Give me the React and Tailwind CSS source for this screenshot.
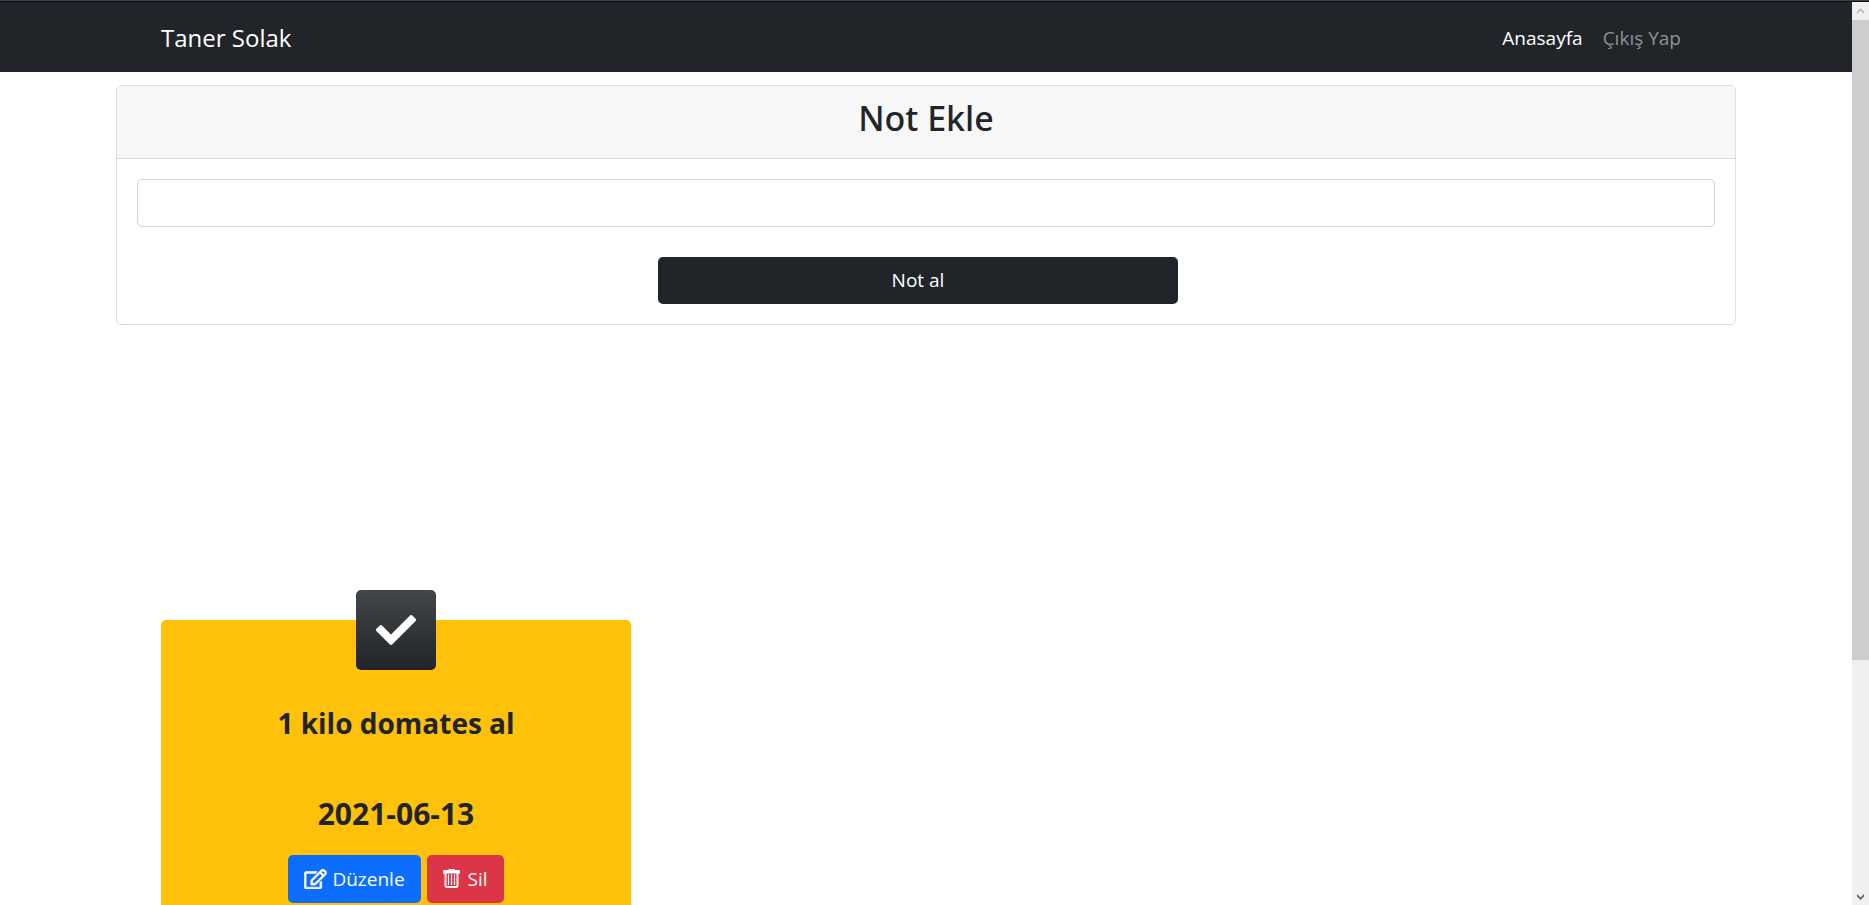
import { FaCheck, FaRegEdit } from "react-icons/fa";

function TrashIcon({ className }) {
  return (
    <svg viewBox="0 0 17 20" className={className} aria-hidden="true">
      <path fill="currentColor" d="M6 0h5l1 1h4a1 1 0 0 1 1 1v2.500H0V2a1 1 0 0 1 1-1h4z" />
      <path
        fill="none"
        stroke="currentColor"
        strokeWidth="2"
        d="M2.500 4v12.500A1.500 1.500 0 0 0 4 18h9a1.500 1.500 0 0 0 1.500-1.500V4"
      />
      <path stroke="currentColor" strokeWidth="1.200" d="M5.500 5.500v10.500M8.500 5.500v10.500M11.500 5.500v10.500" />
    </svg>
  );
}

function Navbar() {
  return (
    <nav className="h-[72px] shrink-0 border-t border-[#33414f] bg-[#212529]">
      <div className="flex h-full items-center justify-between border-t border-[#0e1216] px-[161px] pt-px">
        <a href="#" className="text-2xl leading-[38px] text-white">
          Taner Solak
        </a>
        <ul className="flex items-center gap-5 pr-[10px] text-[19px] leading-[30px]">
          <li>
            <a href="#" className="text-white" aria-current="page">
              Anasayfa
            </a>
          </li>
          <li>
            <a href="#" className="text-[#909294]">
              Çıkış Yap
            </a>
          </li>
        </ul>
      </div>
    </nav>
  );
}

function AddNote() {
  return (
    <section className="mx-[116px] mt-[13px] rounded-[5px] border border-[#dfdfdf] bg-white">
      <h1 className="h-[73px] rounded-t-[4px] border-b border-[#d7d7d7] bg-[#f7f7f7] pt-[10px] text-center font-['Noto_Sans','Open_Sans',sans-serif] text-[34px] leading-[44px] font-medium">
        Not Ekle
      </h1>
      <form className="flex flex-col items-center p-5" onSubmit={(e) => e.preventDefault()}>
        <input
          type="text"
          aria-label="Not"
          className="h-12 w-full rounded-[5px] border border-[#ced4da] bg-white px-4 text-[19px] outline-none"
        />
        <button
          type="submit"
          className="mt-[30px] mr-4 h-[47px] w-full max-w-[520px] rounded-[5px] bg-[#212529] text-[19px] text-white"
        >
          Not al
        </button>
      </form>
    </section>
  );
}

function NoteCard({ title, date }) {
  return (
    <article className="flex w-[470px] flex-col items-center rounded-[5px] bg-[#ffc10a] pb-10">
      <div className="-mt-[30px] flex size-20 items-center justify-center rounded-[5px] bg-linear-to-b from-[#434749] to-[#212529] text-white">
        <FaCheck className="size-10" />
      </div>
      <h2 className="mt-[35px] text-[28px] leading-9 font-bold">{title}</h2>
      <p className="mt-[55px] text-[30px] leading-9 font-bold">{date}</p>
      <div className="mt-[23px] flex gap-[6px] text-[19px] text-white">
        <button type="button" className="flex h-12 items-center gap-[5px] rounded-[5px] bg-[#0d6efd] px-4">
          <FaRegEdit className="h-5 w-[23px] stroke-current [stroke-width:14]" />
          Düzenle
        </button>
        <button type="button" className="flex h-12 items-center gap-2 rounded-[5px] bg-[#dc3545] px-4">
          <TrashIcon className="h-5 w-[17px]" />
          Sil
        </button>
      </div>
    </article>
  );
}

function Chevron({ className }) {
  return (
    <svg viewBox="0 0 7 6" className={className} fill="currentColor" aria-hidden="true">
      <path d="M3.5 0 7 3.5V6L3.5 2.6 0 6V3.5z" />
    </svg>
  );
}

function Scrollbar() {
  return (
    <div className="flex w-[17px] shrink-0 flex-col border-t border-[#33414f] bg-[#f0f0f0]" aria-hidden="true">
      <div className="flex h-[19px] items-center justify-center border-t border-[#0e1216]">
        <Chevron className="h-[6px] w-[7px] text-[#bcbcbc]" />
      </div>
      <div className="flex flex-1 flex-col">
        <div className="grow-[640] bg-[#cdcdcd]" />
        <div className="grow-[228]" />
      </div>
      <div className="flex h-[17px] items-center justify-center">
        <Chevron className="h-[6px] w-[7px] rotate-180 text-[#606060]" />
      </div>
    </div>
  );
}

export default function App() {
  return (
    <div className="flex h-screen overflow-hidden bg-white font-['Open_Sans','Noto_Sans',sans-serif] text-[#212529]">
      <div className="flex min-w-0 flex-1 flex-col overflow-hidden">
        <Navbar />
        <main>
          <AddNote />
          <section className="mt-[295px] px-[161px]">
            <NoteCard title="1 kilo domates al" date="2021-06-13" />
          </section>
        </main>
      </div>
      <Scrollbar />
    </div>
  );
}
